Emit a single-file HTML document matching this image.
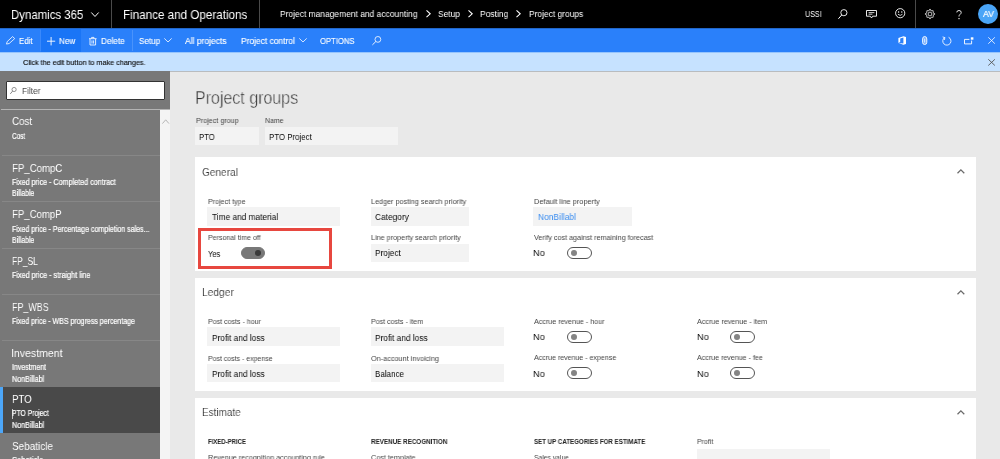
<!DOCTYPE html>
<html><head><meta charset="utf-8"><title>Project groups</title>
<style>
*{box-sizing:border-box;margin:0;padding:0}
html,body{width:1000px;height:459px;overflow:hidden;background:#e9e9e9;font-family:"Liberation Sans",sans-serif;}
body{position:relative}
.x{position:absolute;white-space:pre;z-index:5;transform-origin:0 0;will-change:transform}
.a{position:absolute}
.f{position:absolute;background:#f3f3f3;height:18.4px}
.tg{position:absolute;width:24.6px;height:11.6px;border:1px solid #555;border-radius:6px;background:#fff}
.tg i{position:absolute;left:3.4px;top:1.9px;width:5.8px;height:5.8px;border-radius:50%;background:#858585}
.tg.on{background:#787878;border-color:#787878}
.tg.on i{left:auto;right:3.4px;background:#3a3a3a}
svg{position:absolute;overflow:visible}
</style></head><body>
<!-- top black bar -->
<div class="a" style="left:0;top:0;width:1000px;height:28.2px;background:#000"></div>
<div class="a" style="left:110.8px;top:0;width:1px;height:28px;background:#4a4a4a"></div>
<div class="a" style="left:258.9px;top:0;width:1px;height:28px;background:#4a4a4a"></div>
<div class="a" style="left:915.4px;top:0;width:1px;height:28px;background:#4a4a4a"></div>
<svg style="left:91px;top:12.4px" width="8" height="5.2" viewBox="0 0 8 5.2"><path d="M0.3 0.5 L4 4.5 L7.7 0.5" stroke="#fff" fill="none" stroke-width="1"/></svg>
<!-- breadcrumb chevrons -->
<svg style="left:426px;top:9.5px" width="4.8" height="7.6" viewBox="0 0 4.8 7.6"><path d="M0.5 0.4 L4.2 3.8 L0.5 7.2" stroke="#fff" fill="none" stroke-width="1.1"/></svg>
<svg style="left:468px;top:9.5px" width="4.8" height="7.6" viewBox="0 0 4.8 7.6"><path d="M0.5 0.4 L4.2 3.8 L0.5 7.2" stroke="#fff" fill="none" stroke-width="1.1"/></svg>
<svg style="left:516.4px;top:9.5px" width="4.8" height="7.6" viewBox="0 0 4.8 7.6"><path d="M0.5 0.4 L4.2 3.8 L0.5 7.2" stroke="#fff" fill="none" stroke-width="1.1"/></svg>
<!-- top right icons -->
<svg style="left:837.6px;top:9.2px" width="9.6" height="10.2" viewBox="0 0 9.6 10.2"><circle cx="5.9" cy="3.7" r="3.1" stroke="#fff" fill="none" stroke-width="0.9"/><path d="M3.7 6 L0.4 9.8" stroke="#fff" stroke-width="1"/></svg>
<svg style="left:865.8px;top:9.9px" width="11" height="9" viewBox="0 0 11 9"><path d="M0.5 0.5 H10.5 V6.2 H6.6 L5.5 8 L4.4 6.2 H0.5 Z" stroke="#fff" fill="none" stroke-width="0.9"/><path d="M2.6 2.6 H8.4 M2.6 4.2 H6.4" stroke="#fff" stroke-width="0.8"/></svg>
<svg style="left:895px;top:8.4px" width="10.4" height="10.4" viewBox="0 0 10.4 10.4"><circle cx="5.2" cy="5.2" r="4.6" stroke="#fff" fill="none" stroke-width="0.9"/><circle cx="3.6" cy="4" r="0.7" fill="#fff"/><circle cx="6.8" cy="4" r="0.7" fill="#fff"/><path d="M2.9 6.2 Q5.2 8.6 7.5 6.2" stroke="#fff" fill="none" stroke-width="0.8"/></svg>
<svg style="left:925px;top:8.6px" width="10" height="10" viewBox="0 0 10 10"><path d="M8.64 4.36 L9.58 4.53 L9.58 5.47 L8.64 5.64 L8.03 7.13 L8.57 7.90 L7.90 8.57 L7.13 8.03 L5.64 8.64 L5.47 9.58 L4.53 9.58 L4.36 8.64 L2.87 8.03 L2.10 8.57 L1.43 7.90 L1.97 7.13 L1.36 5.64 L0.42 5.47 L0.42 4.53 L1.36 4.36 L1.97 2.87 L1.43 2.10 L2.10 1.43 L2.87 1.97 L4.36 1.36 L4.53 0.42 L5.47 0.42 L5.64 1.36 L7.13 1.97 L7.90 1.43 L8.57 2.10 L8.03 2.87 Z" stroke="#fff" fill="none" stroke-width="0.75" stroke-linejoin="round"/><circle cx="5" cy="5" r="1.9" stroke="#fff" fill="none" stroke-width="0.75"/></svg>
<svg style="left:956px;top:9.5px" width="6" height="9.5" viewBox="0 0 6 9.5"><path d="M0.8 2.4 Q0.8 0.5 3 0.5 Q5.2 0.5 5.2 2.4 Q5.2 3.6 4 4.4 Q3 5.1 3 6.5" stroke="#fff" fill="none" stroke-width="0.9"/><rect x="2.45" y="8" width="1.1" height="1.2" fill="#fff"/></svg>
<div class="a" style="left:978px;top:4px;width:19.8px;height:19.8px;border-radius:50%;background:#4aa5f7"></div>
<!-- blue bar -->
<div class="a" style="left:0;top:28.2px;width:1000px;height:24.2px;background:#2a80fa"></div>
<div class="a" style="left:41px;top:28.2px;width:40.4px;height:24.2px;background:#1a75f6"></div>
<div class="a" style="left:39.6px;top:30px;width:1px;height:20.5px;background:#3a89fb"></div>
<div class="a" style="left:131.8px;top:30px;width:1px;height:20.5px;background:#4a93fb"></div>
<!-- pencil -->
<svg style="left:6.4px;top:36px" width="9.4" height="8.6" viewBox="0 0 9.4 8.6"><path d="M0.5 8.1 L1.2 5.6 L6.6 0.6 L8.7 2.6 L3.2 7.5 Z" stroke="#fff" fill="none" stroke-width="0.8"/></svg>
<!-- plus -->
<svg style="left:47.2px;top:36.6px" width="8.2" height="8.4" viewBox="0 0 8.2 8.4"><path d="M4.1 0 V8.4 M0 4.2 H8.2" stroke="#fff" stroke-width="0.9"/></svg>
<!-- trash -->
<svg style="left:89.3px;top:36.6px" width="7.6" height="8.4" viewBox="0 0 7.6 8.4"><path d="M0 1.7 H7.6 M2.6 1.5 V0.4 H5 V1.5 M1 1.9 V8 H6.6 V1.9 M3 3.4 V6.6 M4.6 3.4 V6.6" stroke="#fff" fill="none" stroke-width="0.85" stroke-linejoin="miter"/></svg>
<!-- chevrons in bar -->
<svg style="left:164px;top:38px" width="8" height="4.6" viewBox="0 0 8 4.6"><path d="M0.3 0.4 L4 4 L7.7 0.4" stroke="#fff" fill="none" stroke-width="0.8"/></svg>
<svg style="left:299px;top:38px" width="8" height="4.6" viewBox="0 0 8 4.6"><path d="M0.3 0.4 L4 4 L7.7 0.4" stroke="#fff" fill="none" stroke-width="0.8"/></svg>
<!-- search in bar -->
<svg style="left:371.6px;top:36px" width="9.4" height="9.2" viewBox="0 0 9.4 9.2"><circle cx="5.9" cy="3.4" r="2.9" stroke="#fff" fill="none" stroke-width="0.8"/><path d="M3.8 5.6 L0.4 8.9" stroke="#fff" stroke-width="0.9"/></svg>
<!-- office -->
<svg style="left:897.7px;top:36.3px" width="8.4" height="9" viewBox="0 0 8.4 9"><path d="M0.4 2 L5.4 0.2 L8 1 V8 L5.4 8.8 L0.4 7 L5.4 7.6 V1.6 L2.2 2.5 V6 L0.4 7 Z" fill="#fff"/></svg>
<!-- paperclip -->
<svg style="left:921.9px;top:36px" width="5.4" height="9" viewBox="0 0 5.4 9"><path d="M0.6 3 Q0.6 0.5 2.7 0.5 Q4.8 0.5 4.8 3 V6.4 Q4.8 8.5 2.7 8.5 Q0.6 8.5 0.6 6.4 Z" stroke="#fff" fill="#fff" fill-opacity="0.35" stroke-width="0.9"/><path d="M2.7 2.6 V6.6" stroke="#fff" stroke-width="0.8"/></svg>
<!-- refresh -->
<svg style="left:941.8px;top:36px" width="9.4" height="9.6" viewBox="0 0 9.4 9.6"><path d="M2.6 1.6 A4.1 4.1 0 1 0 6.6 1.3" stroke="#fff" fill="none" stroke-width="0.85"/><path d="M0.6 0.9 L2.8 1.6 L2.5 3.9" stroke="#fff" fill="none" stroke-width="0.85"/></svg>
<!-- popout -->
<svg style="left:964px;top:36.8px" width="9.8" height="7.4" viewBox="0 0 9.8 7.4"><path d="M5.4 2.4 H0.5 V6.9 H7.6 V3.6" stroke="#fff" fill="none" stroke-width="0.9"/><rect x="6.8" y="0.3" width="2.6" height="2.4" fill="#fff"/></svg>
<!-- X -->
<svg style="left:988px;top:37px" width="7.2" height="7" viewBox="0 0 7.2 7"><path d="M0.3 0.3 L6.9 6.7 M6.9 0.3 L0.3 6.7" stroke="#fff" stroke-width="0.8"/></svg>
<!-- message bar -->
<div class="a" style="left:0;top:52px;width:1000px;height:1px;background:#97c5fd;z-index:1"></div>
<div class="a" style="left:0;top:28px;width:1000px;height:1px;background:#2266c8;z-index:1"></div>
<div class="a" style="left:0;top:52.4px;width:1000px;height:18.4px;background:#c6e2ff"></div>
<div class="a" style="left:0;top:70.6px;width:1000px;height:1px;background:#b9bcbf"></div>
<svg style="left:988px;top:59px" width="7.2" height="6.8" viewBox="0 0 7.2 6.8"><path d="M0.3 0.3 L6.9 6.5 M6.9 0.3 L0.3 6.5" stroke="#555" stroke-width="0.9"/></svg>
<!-- sidebar -->
<div class="a" style="left:0;top:71.4px;width:170.2px;height:388px;background:#787878"></div>
<div class="a" style="left:6.2px;top:81px;width:158.4px;height:18.8px;background:#fff;border:1.1px solid #333;border-radius:1px"></div>
<svg style="left:10px;top:87px" width="6.6" height="7.2" viewBox="0 0 6.6 7.2"><circle cx="4.1" cy="2.5" r="2.1" stroke="#666" fill="none" stroke-width="0.7"/><path d="M2.6 4.1 L0.3 6.9" stroke="#666" stroke-width="0.8"/></svg>
<div class="a" style="left:160.2px;top:109.3px;width:10px;height:350px;background:#f4f4f4"></div>
<svg style="left:161.8px;top:119px" width="7.4" height="5" viewBox="0 0 7.4 5"><path d="M0.4 4.6 L3.7 0.8 L7 4.6" stroke="#b5b5b5" fill="none" stroke-width="1"/></svg>
<!-- item separators -->
<div class="a" style="left:1px;top:109px;width:169.2px;height:1px;background:#b4b4b4"></div>
<div class="a" style="left:1.5px;top:155.1px;width:158.7px;height:1px;background:#878787"></div>
<div class="a" style="left:1.5px;top:201.1px;width:158.7px;height:1px;background:#878787"></div>
<div class="a" style="left:1.5px;top:247.6px;width:158.7px;height:1px;background:#878787"></div>
<div class="a" style="left:1.5px;top:293.6px;width:158.7px;height:1px;background:#878787"></div>
<div class="a" style="left:1.5px;top:339.8px;width:158.7px;height:1px;background:#878787"></div>
<div class="a" style="left:0;top:386.8px;width:160.2px;height:46.2px;background:#494949"></div>
<div class="a" style="left:0;top:386.8px;width:3.1px;height:46.6px;background:#4ca6f8"></div>
<div class="a" style="left:12px;top:409px;width:0.8px;height:9.6px;background:#c4c4c4"></div>
<!-- header fields -->
<div class="f" style="left:195px;top:126.5px;width:63.6px"></div>
<div class="f" style="left:265px;top:126.5px;width:133px"></div>
<!-- cards -->
<div class="a" style="left:195px;top:157px;width:780.8px;height:114px;background:#fff"></div>
<div class="a" style="left:195px;top:277.8px;width:780.8px;height:113.4px;background:#fff"></div>
<div class="a" style="left:195px;top:398px;width:780.8px;height:70px;background:#fff"></div>
<svg style="left:957.4px;top:169.4px" width="7.8" height="4.8" viewBox="0 0 7.8 4.8"><path d="M0.5 4.3 L3.9 0.9 L7.3 4.3" stroke="#6a6a6a" fill="none" stroke-width="1.25"/></svg>
<svg style="left:957.4px;top:290.2px" width="7.8" height="4.8" viewBox="0 0 7.8 4.8"><path d="M0.5 4.3 L3.9 0.9 L7.3 4.3" stroke="#6a6a6a" fill="none" stroke-width="1.25"/></svg>
<svg style="left:957.4px;top:410.4px" width="7.8" height="4.8" viewBox="0 0 7.8 4.8"><path d="M0.5 4.3 L3.9 0.9 L7.3 4.3" stroke="#6a6a6a" fill="none" stroke-width="1.25"/></svg>
<!-- General fields -->
<div class="f" style="left:207px;top:207.2px;width:133.2px"></div>
<div class="f" style="left:370.6px;top:207.2px;width:98px"></div>
<div class="f" style="left:533.4px;top:207.2px;width:99px"></div>
<div class="f" style="left:370.6px;top:243.6px;width:98px"></div>
<div class="a" style="left:198px;top:228px;width:134px;height:41px;border:3px solid #e7473f"></div>
<div class="tg on" style="left:240.6px;top:247px"><i></i></div>
<div class="tg" style="left:567px;top:247px"><i></i></div>
<!-- Ledger fields -->
<div class="f" style="left:207px;top:327.4px;width:133.2px"></div>
<div class="f" style="left:207px;top:363.8px;width:133.2px"></div>
<div class="f" style="left:370.6px;top:327.4px;width:133.2px"></div>
<div class="f" style="left:370.6px;top:363.8px;width:133.2px"></div>
<div class="tg" style="left:567px;top:331px"><i></i></div>
<div class="tg" style="left:567px;top:367.2px"><i></i></div>
<div class="tg" style="left:730px;top:331px"><i></i></div>
<div class="tg" style="left:730px;top:367.2px"><i></i></div>
<!-- Estimate -->
<div class="f" style="left:696.6px;top:448.6px;width:133px"></div>

<span class="x" style="left:11.49px;top:9.01px;font-size:12.6px;line-height:12.6px;transform:scaleX(0.9062);color:#fff;">Dynamics 365</span>
<span class="x" style="left:122.67px;top:9.01px;font-size:12.6px;line-height:12.6px;transform:scaleX(0.9255);color:#fff;">Finance and Operations</span>
<span class="x" style="left:280.40px;top:8.82px;font-size:9.6px;line-height:9.6px;transform:scaleX(0.8799);color:#fff;">Project management and accounting</span>
<span class="x" style="left:438.40px;top:8.82px;font-size:9.6px;line-height:9.6px;transform:scaleX(0.8732);color:#fff;">Setup</span>
<span class="x" style="left:480.40px;top:8.82px;font-size:9.6px;line-height:9.6px;transform:scaleX(0.8843);color:#fff;">Posting</span>
<span class="x" style="left:528.60px;top:8.82px;font-size:9.6px;line-height:9.6px;transform:scaleX(0.8766);color:#fff;">Project groups</span>
<span class="x" style="left:804.80px;top:8.82px;font-size:9.6px;line-height:9.6px;transform:scaleX(0.7456);color:#fff;">USSI</span>
<span class="x" style="left:982.80px;top:10.01px;font-size:9.0px;line-height:9.0px;transform:scaleX(0.9704);color:#fff;-webkit-text-stroke:0.2px #fff;">AV</span>
<span class="x" style="left:18.90px;top:36.62px;font-size:9.2px;line-height:9.2px;transform:scaleX(0.8539);color:#fff;-webkit-text-stroke:0.12px #fff;">Edit</span>
<span class="x" style="left:59.00px;top:36.62px;font-size:9.2px;line-height:9.2px;transform:scaleX(0.8856);color:#fff;-webkit-text-stroke:0.12px #fff;">New</span>
<span class="x" style="left:101.40px;top:36.62px;font-size:9.2px;line-height:9.2px;transform:scaleX(0.8923);color:#fff;-webkit-text-stroke:0.12px #fff;">Delete</span>
<span class="x" style="left:139.00px;top:36.62px;font-size:9.2px;line-height:9.2px;transform:scaleX(0.8787);color:#fff;-webkit-text-stroke:0.12px #fff;">Setup</span>
<span class="x" style="left:185.00px;top:36.62px;font-size:9.2px;line-height:9.2px;transform:scaleX(0.9264);color:#fff;-webkit-text-stroke:0.12px #fff;">All projects</span>
<span class="x" style="left:240.60px;top:36.62px;font-size:9.2px;line-height:9.2px;transform:scaleX(0.9168);color:#fff;-webkit-text-stroke:0.12px #fff;">Project control</span>
<span class="x" style="left:319.60px;top:37.01px;font-size:8.4px;line-height:8.4px;transform:scaleX(0.9185);color:#fff;-webkit-text-stroke:0.12px #fff;">OPTIONS</span>
<span class="x" style="left:23.00px;top:59.01px;font-size:7.5px;line-height:7.5px;transform:scaleX(0.9632);color:#111;-webkit-text-stroke:0.15px #111;">Click the edit button to make changes.</span>
<span class="x" style="left:21.60px;top:87.01px;font-size:9.0px;line-height:9.0px;transform:scaleX(0.9199);color:#4a4a4a;">Filter</span>
<span class="x" style="left:12.30px;top:116.01px;font-size:11.8px;line-height:11.8px;transform:scaleX(0.8287);color:#fff;">Cost</span>
<span class="x" style="left:12.30px;top:133.01px;font-size:8.2px;line-height:8.2px;transform:scaleX(0.7802);color:#fff;-webkit-text-stroke:0.2px #fff;">Cost</span>
<span class="x" style="left:12.30px;top:163.01px;font-size:11.8px;line-height:11.8px;transform:scaleX(0.8164);color:#fff;">FP_CompC</span>
<span class="x" style="left:12.30px;top:179.01px;font-size:8.2px;line-height:8.2px;transform:scaleX(0.8762);color:#fff;-webkit-text-stroke:0.2px #fff;">Fixed price - Completed contract</span>
<span class="x" style="left:12.30px;top:190.01px;font-size:8.2px;line-height:8.2px;transform:scaleX(0.8456);color:#fff;-webkit-text-stroke:0.2px #fff;">Billable</span>
<span class="x" style="left:12.30px;top:209.01px;font-size:11.8px;line-height:11.8px;transform:scaleX(0.8134);color:#fff;">FP_CompP</span>
<span class="x" style="left:12.30px;top:226.01px;font-size:8.2px;line-height:8.2px;transform:scaleX(0.8635);color:#fff;-webkit-text-stroke:0.2px #fff;">Fixed price - Percentage completion sales...</span>
<span class="x" style="left:12.30px;top:236.51px;font-size:8.2px;line-height:8.2px;transform:scaleX(0.8456);color:#fff;-webkit-text-stroke:0.2px #fff;">Billable</span>
<span class="x" style="left:12.30px;top:256.01px;font-size:11.8px;line-height:11.8px;transform:scaleX(0.7150);color:#fff;">FP_SL</span>
<span class="x" style="left:12.30px;top:272.01px;font-size:8.2px;line-height:8.2px;transform:scaleX(0.8780);color:#fff;-webkit-text-stroke:0.2px #fff;">Fixed price - straight line</span>
<span class="x" style="left:12.30px;top:301.51px;font-size:11.8px;line-height:11.8px;transform:scaleX(0.7546);color:#fff;">FP_WBS</span>
<span class="x" style="left:12.30px;top:318.01px;font-size:8.2px;line-height:8.2px;transform:scaleX(0.8575);color:#fff;-webkit-text-stroke:0.2px #fff;">Fixed price - WBS progress percentage</span>
<span class="x" style="left:11.41px;top:348.01px;font-size:11.8px;line-height:11.8px;transform:scaleX(0.8934);color:#fff;">Investment</span>
<span class="x" style="left:12.30px;top:364.01px;font-size:8.2px;line-height:8.2px;transform:scaleX(0.8511);color:#fff;-webkit-text-stroke:0.2px #fff;">Investment</span>
<span class="x" style="left:12.30px;top:375.51px;font-size:8.2px;line-height:8.2px;transform:scaleX(0.8719);color:#fff;-webkit-text-stroke:0.2px #fff;">NonBillabl</span>
<span class="x" style="left:12.30px;top:394.01px;font-size:11.8px;line-height:11.8px;transform:scaleX(0.8256);color:#fff;">PTO</span>
<span class="x" style="left:12.30px;top:410.01px;font-size:8.2px;line-height:8.2px;transform:scaleX(0.8259);color:#fff;-webkit-text-stroke:0.2px #fff;">PTO Project</span>
<span class="x" style="left:12.30px;top:422.01px;font-size:8.2px;line-height:8.2px;transform:scaleX(0.8719);color:#fff;-webkit-text-stroke:0.2px #fff;">NonBillabl</span>
<span class="x" style="left:12.30px;top:441.01px;font-size:11.8px;line-height:11.8px;transform:scaleX(0.8434);color:#fff;">Sebaticle</span>
<span class="x" style="left:12.30px;top:457.01px;font-size:8.2px;line-height:8.2px;transform:scaleX(0.9289);color:#fff;-webkit-text-stroke:0.2px #fff;">Sebaticle</span>
<span class="x" style="left:194.69px;top:89.61px;font-size:17.6px;line-height:17.6px;transform:scaleX(0.9091);color:#333;-webkit-text-stroke:0.4px #e9e9e9;">Project groups</span>
<span class="x" style="left:195.60px;top:117.01px;font-size:7.5px;line-height:7.5px;transform:scaleX(0.9564);color:#454545;">Project group</span>
<span class="x" style="left:265.00px;top:117.01px;font-size:7.5px;line-height:7.5px;transform:scaleX(0.9277);color:#454545;">Name</span>
<span class="x" style="left:199.00px;top:131.60px;font-size:9.6px;line-height:9.6px;transform:scaleX(0.8069);color:#0a0a0a;">PTO</span>
<span class="x" style="left:268.60px;top:131.60px;font-size:9.6px;line-height:9.6px;transform:scaleX(0.8205);color:#0a0a0a;">PTO Project</span>
<span class="x" style="left:201.60px;top:167.01px;font-size:11.3px;line-height:11.3px;transform:scaleX(0.8921);color:#2b2b2b;-webkit-text-stroke:0.12px #fff;">General</span>
<span class="x" style="left:207.60px;top:198.01px;font-size:7.5px;line-height:7.5px;transform:scaleX(0.9485);color:#454545;">Project type</span>
<span class="x" style="left:212.00px;top:212.01px;font-size:9.6px;line-height:9.6px;transform:scaleX(0.8651);color:#0a0a0a;">Time and material</span>
<span class="x" style="left:207.60px;top:234.40px;font-size:7.5px;line-height:7.5px;transform:scaleX(0.9359);color:#454545;">Personal time off</span>
<span class="x" style="left:207.60px;top:248.60px;font-size:9.6px;line-height:9.6px;transform:scaleX(0.7822);color:#0a0a0a;">Yes</span>
<span class="x" style="left:370.60px;top:198.01px;font-size:7.5px;line-height:7.5px;transform:scaleX(0.9631);color:#454545;">Ledger posting search priority</span>
<span class="x" style="left:374.60px;top:212.01px;font-size:9.6px;line-height:9.6px;transform:scaleX(0.8689);color:#0a0a0a;">Category</span>
<span class="x" style="left:370.60px;top:234.40px;font-size:7.5px;line-height:7.5px;transform:scaleX(0.9634);color:#454545;">Line property search priority</span>
<span class="x" style="left:374.60px;top:248.41px;font-size:9.6px;line-height:9.6px;transform:scaleX(0.8611);color:#0a0a0a;">Project</span>
<span class="x" style="left:533.60px;top:198.01px;font-size:7.5px;line-height:7.5px;transform:scaleX(0.9797);color:#454545;">Default line property</span>
<span class="x" style="left:537.60px;top:212.01px;font-size:9.6px;line-height:9.6px;transform:scaleX(0.8778);color:#3b8df0;">NonBillabl</span>
<span class="x" style="left:533.60px;top:234.40px;font-size:7.5px;line-height:7.5px;transform:scaleX(0.9557);color:#454545;">Verify cost against remaining forecast</span>
<span class="x" style="left:533.30px;top:248.41px;font-size:9.6px;line-height:9.6px;transform:scaleX(0.9557);color:#0a0a0a;">No</span>
<span class="x" style="left:201.60px;top:287.01px;font-size:11.3px;line-height:11.3px;transform:scaleX(0.9036);color:#2b2b2b;-webkit-text-stroke:0.12px #fff;">Ledger</span>
<span class="x" style="left:207.60px;top:318.01px;font-size:7.5px;line-height:7.5px;transform:scaleX(0.9406);color:#454545;">Post costs - hour</span>
<span class="x" style="left:211.60px;top:332.71px;font-size:9.6px;line-height:9.6px;transform:scaleX(0.8657);color:#0a0a0a;">Profit and loss</span>
<span class="x" style="left:207.60px;top:354.71px;font-size:7.5px;line-height:7.5px;transform:scaleX(0.9273);color:#454545;">Post costs - expense</span>
<span class="x" style="left:211.60px;top:369.01px;font-size:9.6px;line-height:9.6px;transform:scaleX(0.8657);color:#0a0a0a;">Profit and loss</span>
<span class="x" style="left:370.60px;top:318.01px;font-size:7.5px;line-height:7.5px;transform:scaleX(0.9405);color:#454545;">Post costs - item</span>
<span class="x" style="left:374.80px;top:332.71px;font-size:9.6px;line-height:9.6px;transform:scaleX(0.8657);color:#0a0a0a;">Profit and loss</span>
<span class="x" style="left:370.60px;top:354.71px;font-size:7.5px;line-height:7.5px;transform:scaleX(0.9719);color:#454545;">On-account invoicing</span>
<span class="x" style="left:374.80px;top:369.01px;font-size:9.6px;line-height:9.6px;transform:scaleX(0.8359);color:#0a0a0a;">Balance</span>
<span class="x" style="left:533.60px;top:318.01px;font-size:7.5px;line-height:7.5px;transform:scaleX(0.9504);color:#454545;">Accrue revenue - hour</span>
<span class="x" style="left:533.30px;top:332.21px;font-size:9.6px;line-height:9.6px;transform:scaleX(0.9557);color:#0a0a0a;">No</span>
<span class="x" style="left:533.60px;top:354.40px;font-size:7.5px;line-height:7.5px;transform:scaleX(0.9384);color:#454545;">Accrue revenue - expense</span>
<span class="x" style="left:533.30px;top:368.60px;font-size:9.6px;line-height:9.6px;transform:scaleX(0.9557);color:#0a0a0a;">No</span>
<span class="x" style="left:697.00px;top:318.01px;font-size:7.5px;line-height:7.5px;transform:scaleX(0.9574);color:#454545;">Accrue revenue - item</span>
<span class="x" style="left:696.70px;top:332.21px;font-size:9.6px;line-height:9.6px;transform:scaleX(0.9557);color:#0a0a0a;">No</span>
<span class="x" style="left:697.00px;top:354.40px;font-size:7.5px;line-height:7.5px;transform:scaleX(0.9446);color:#454545;">Accrue revenue - fee</span>
<span class="x" style="left:696.70px;top:368.60px;font-size:9.6px;line-height:9.6px;transform:scaleX(0.9557);color:#0a0a0a;">No</span>
<span class="x" style="left:201.60px;top:407.41px;font-size:11.3px;line-height:11.3px;transform:scaleX(0.8795);color:#2b2b2b;-webkit-text-stroke:0.12px #fff;">Estimate</span>
<span class="x" style="left:207.60px;top:439.01px;font-size:6.8px;line-height:6.8px;transform:scaleX(0.8824);color:#222;font-weight:bold;">FIXED-PRICE</span>
<span class="x" style="left:370.60px;top:439.01px;font-size:6.8px;line-height:6.8px;transform:scaleX(0.9228);color:#222;font-weight:bold;">REVENUE RECOGNITION</span>
<span class="x" style="left:533.60px;top:439.01px;font-size:6.8px;line-height:6.8px;transform:scaleX(0.9066);color:#222;font-weight:bold;">SET UP CATEGORIES FOR ESTIMATE</span>
<span class="x" style="left:697.00px;top:438.40px;font-size:7.5px;line-height:7.5px;transform:scaleX(0.9229);color:#454545;">Profit</span>
<span class="x" style="left:207.60px;top:454.01px;font-size:7.5px;line-height:7.5px;transform:scaleX(0.9607);color:#454545;">Revenue recognition accounting rule</span>
<span class="x" style="left:370.60px;top:454.01px;font-size:7.5px;line-height:7.5px;transform:scaleX(0.9631);color:#454545;">Cost template</span>
<span class="x" style="left:533.60px;top:454.01px;font-size:7.5px;line-height:7.5px;transform:scaleX(0.9015);color:#454545;">Sales value</span>
</body></html>
